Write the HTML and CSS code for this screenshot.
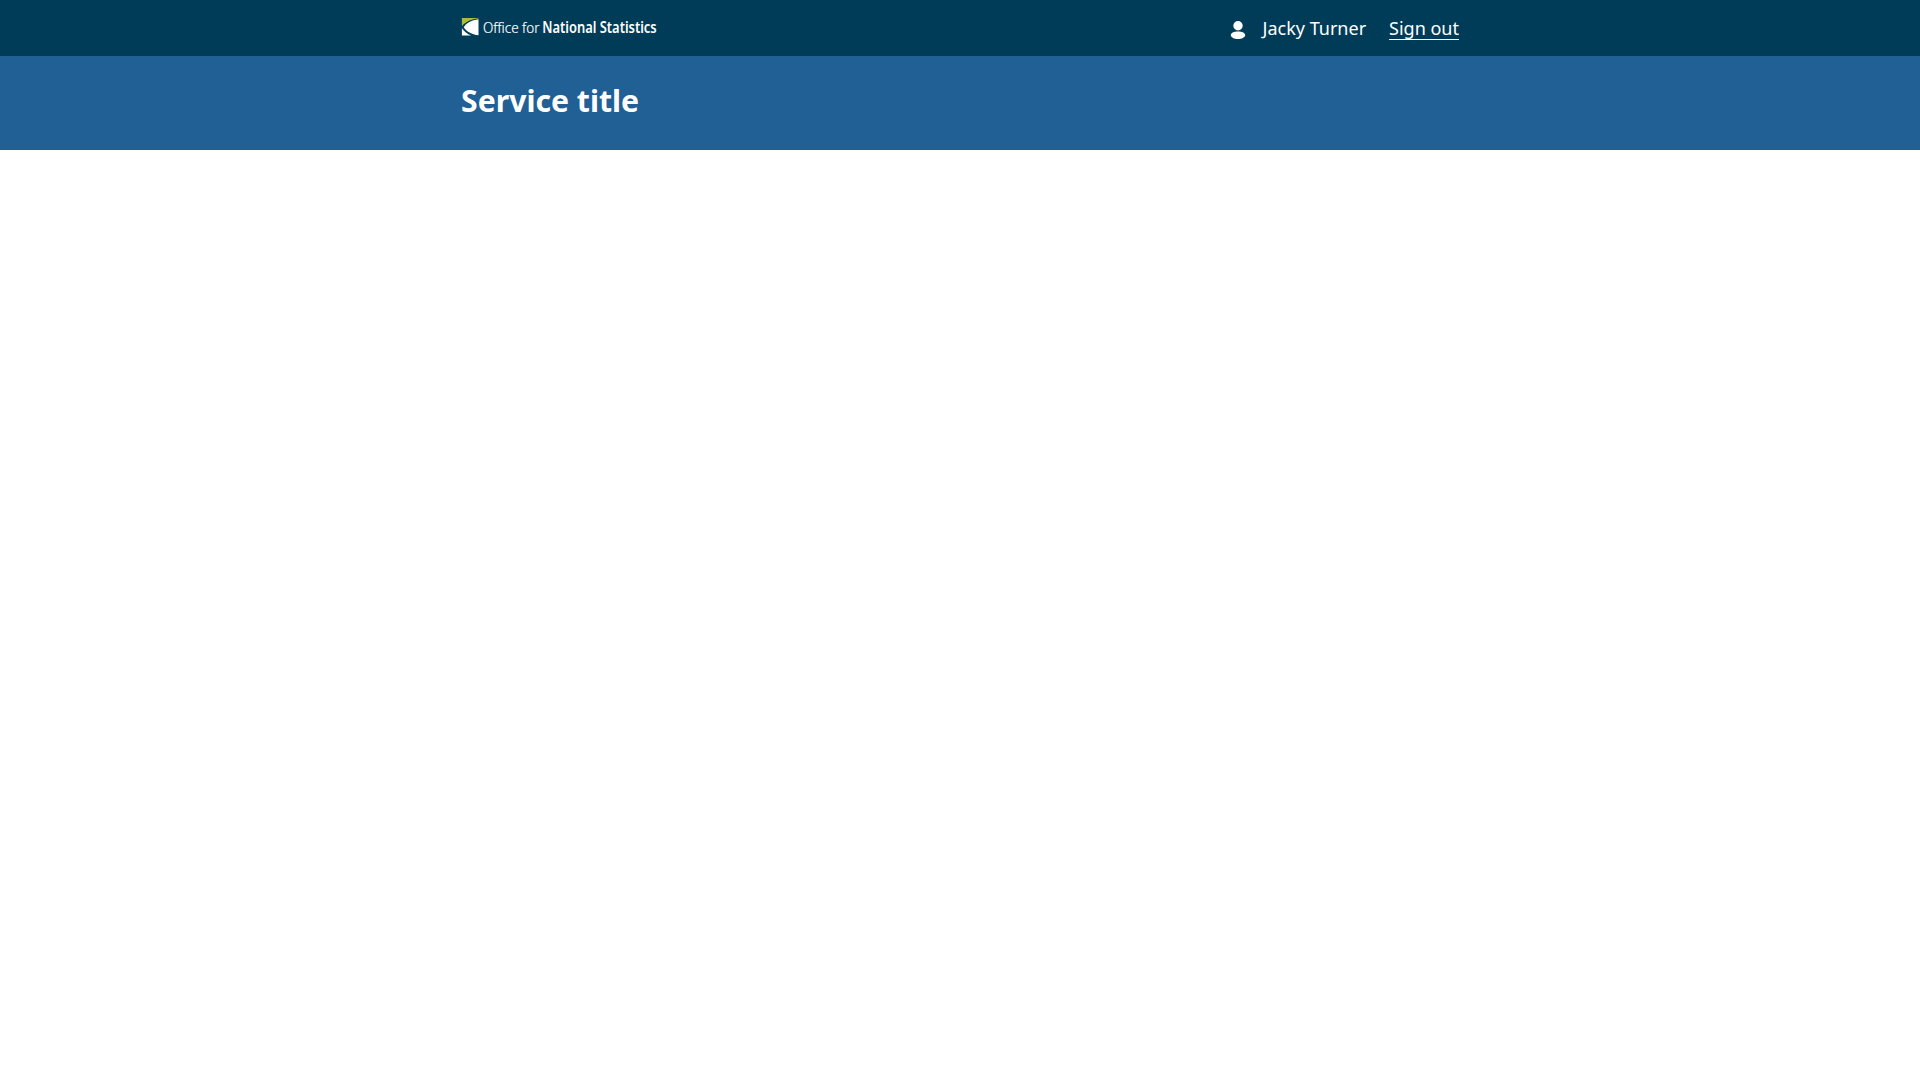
FILE: index.html
```html
<!DOCTYPE html>
<html lang="en">
<head>
<meta charset="utf-8">
<title>Service title</title>
<link rel="stylesheet" href="styles.css">
</head>
<body>
<header class="header">
  <div class="header__top">
    <div class="container header__row">
      <a class="logo" href="#" aria-label="Office for National Statistics">
        <svg class="logo__svg" width="197" height="20" viewBox="0 0 197 20">
          <path fill="#a8bd3a" d="M.9 1h16.600v.6C10.500 2 4.500 4.800.9 9.300z"/>
          <path fill="#fff" d="M17.500 2.200v16C10.500 17.500 5.500 14.500 2.700 10.200 5.500 5.800 10.500 3 17.500 2.200z"/>
          <path fill="#fff" d="M.9 11.200c2.300 3.300 5.300 5.700 9.300 7.400H.9z"/>
          <text class="logo__light" x="22" y="15.500" textLength="56.500" lengthAdjust="spacingAndGlyphs">Office for</text>
          <text class="logo__bold" x="81.200" y="15.500" textLength="114.500" lengthAdjust="spacingAndGlyphs">National Statistics</text>
        </svg>
      </a>
      <nav class="account">
        <a class="account__user" href="#">
          <svg class="account__icon" width="18" height="18" viewBox="0 0 18 18" fill="#fff">
            <circle cx="9" cy="4.700" r="4.700"/>
            <path d="M1.800 14.200c0-2 3-3.600 7.200-3.600s7.200 1.600 7.200 3.600S12.600 18 9 18s-7.200-1.800-7.200-3.800z"/>
          </svg>
          <span>Jacky Turner</span>
        </a>
        <a class="account__signout" href="#">Sign out</a>
      </nav>
    </div>
  </div>
  <div class="header__main">
    <div class="container">
      <div class="header__title">Service title</div>
    </div>
  </div>
</header>
</body>
</html>
```
FILE: styles.css
```css
body {
  margin: 0;
  background: #fff;
  font-family: "Noto Sans", "Open Sans", sans-serif;
  font-size: 18px;
  line-height: 28px;
}

.container {
  width: 998px;
  margin: 0 auto;
}

.header {
  color: #fff;
}

.header__top {
  background: #003c57;
}

.header__row {
  display: flex;
  justify-content: space-between;
  align-items: center;
  height: 56px;
}

.logo {
  display: block;
  padding-bottom: 2px;
}

.logo__svg {
  display: block;
  overflow: visible;
}

.logo text {
  fill: #fff;
  font-size: 15.300px;
}

.logo .logo__light {
  font-weight: 300;
  stroke: #fff;
  stroke-width: 0.2px;
}

.logo .logo__bold {
  font-weight: 600;
}

.account {
  display: flex;
  gap: 23px;
}

.account a {
  color: #fff;
  text-decoration: none;
}

.account__user {
  display: flex;
  align-items: center;
  gap: 16px;
}

.account__icon {
  margin-top: 4px;
}

.account .account__signout {
  text-decoration: underline;
  text-decoration-thickness: 1px;
  text-underline-offset: 4px;
}

.header__main {
  background: #206095;
}

.header__main .container {
  display: flex;
  align-items: center;
  height: 94px;
}

.header__title {
  padding-bottom: 4px;
  font-size: 30.2px;
  font-weight: 700;
  line-height: 40px;
}
```
